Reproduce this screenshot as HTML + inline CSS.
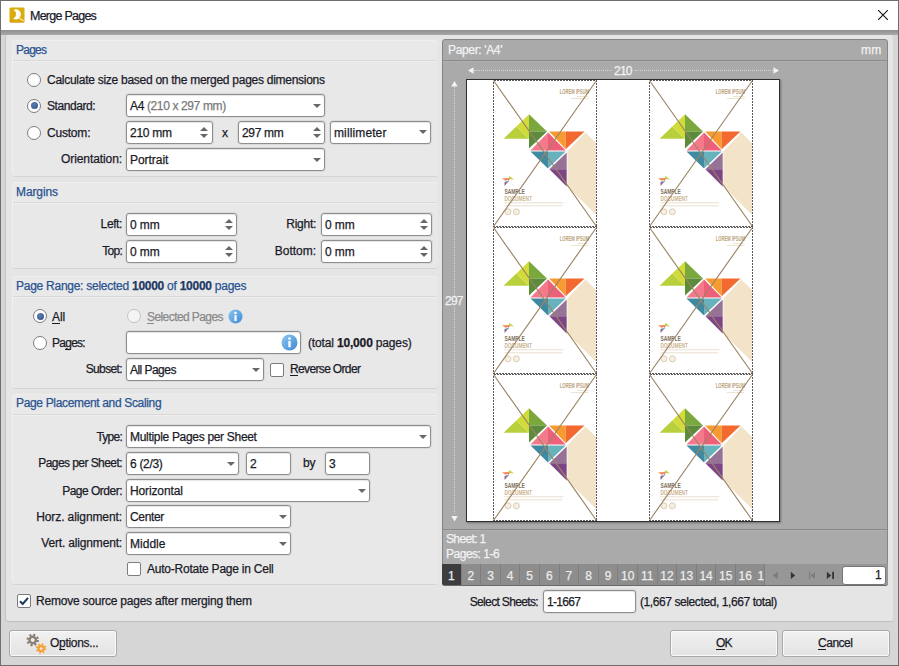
<!DOCTYPE html>
<html><head><meta charset="utf-8">
<style>
*{box-sizing:border-box}
html,body{margin:0;padding:0;width:899px;height:666px;overflow:hidden;background:#d9d9d9}
body{font-family:"Liberation Sans",sans-serif;font-size:12px;letter-spacing:-0.3px;color:#1b1b28;position:relative;-webkit-text-stroke-width:0.25px}
.a{position:absolute;white-space:nowrap;line-height:14px}
.win{position:absolute;left:0;top:0;width:899px;height:666px;border:1px solid #6f6f6f;background:#d6d6d6}
.title{position:absolute;left:1px;top:1px;width:897px;height:29px;background:#fff}
.strip{position:absolute;left:1px;top:30px;width:897px;height:5px;background:linear-gradient(#8f8f8f,#a9a9a9)}
.cont{position:absolute;left:5px;top:35px;width:888px;height:587px;background:#e5e5e5;border-radius:3px;border-left:1px solid #c4c4c4;border-bottom:1px solid #c0c0c0}
.sec{position:absolute;left:12px;width:426px;background:#e8e8e8;border-radius:3px;border-bottom:1px solid #d4d4d4;box-shadow:inset 1px 1px 0 #efefef}
.sech{position:absolute;left:1px;top:1px;width:424px;height:20px;border-bottom:1px solid #d8d8d8;background:#e9e9e9;border-radius:3px 3px 0 0;box-shadow:0 1px 0 #efefef}
.hd{color:#2a5390}
.inp{position:absolute;background:#fff;border:1px solid #8e8e8e;border-radius:3px;box-shadow:0 0 0 1px rgba(0,0,0,.06),inset 0 1px 1px rgba(0,0,0,.1)}
.inp span{position:absolute;left:3px;top:4px;line-height:14px;white-space:nowrap}
.dd{position:absolute;width:0;height:0;border-left:4px solid transparent;border-right:4px solid transparent;border-top:4.5px solid #686868;margin-left:-0.5px}
.up{position:absolute;width:0;height:0;border-left:4px solid transparent;border-right:4px solid transparent;border-bottom:4.5px solid #686868;margin-left:-0.5px}
.rad{position:absolute;width:14px;height:14px;border-radius:50%;border:1px solid #7c7c7c;background:#fff}
.rad.on::after{content:"";position:absolute;left:2.5px;top:2.5px;width:7px;height:7px;border-radius:50%;background:radial-gradient(circle at 40% 35%,#5b7fb0,#2d4f82)}
.chk{position:absolute;width:14px;height:14px;border:1px solid #7c7c7c;background:#fff;border-radius:2px}
.lbl{text-align:right}
.btn{position:absolute;border:1px solid #a9a9a9;border-radius:3px;background:linear-gradient(#f1f1f1,#e3e3e3);box-shadow:inset 0 0 0 1px #fafafa}
.rp{position:absolute;left:442px;top:39px;width:446px;height:547px;background:#aaaaaa;border-radius:3px;border:1px solid #858585}
.wt{color:#f2f2f2}
.tab{position:absolute;top:0;height:21px;width:20px;border-right:1px solid #7e7e7e;text-align:center;color:#ececec;line-height:25px;letter-spacing:0}
u{text-decoration:none;border-bottom:1px solid currentColor;line-height:11px;display:inline-block}
</style></head><body>
<div class="win"></div>
<svg class="a" style="left:0;top:0" width="0" height="0">
<defs>
<symbol id="pg" viewBox="0 0 104 147">
<polygon points="10.6,58.7 23.3,46.5 36,58.7" fill="#b9d03c"></polygon>
<polygon points="36,34.2 23.3,46.5 36,58.7" fill="#d1dc3b"></polygon>
<polygon points="36,34.2 54,51.5 36,51.5" fill="#7aa83d"></polygon>
<polygon points="36,51.5 54,51.5 36,68.6" fill="#5c8b3b"></polygon>
<polygon points="55,52.6 37.5,70.4 55,70.4" fill="#f47a8b"></polygon>
<polygon points="55,52.6 72.7,70.4 55,70.4" fill="#ee6079"></polygon>
<polygon points="37.5,71.5 55,71.5 55,88.4" fill="#3f8aa1"></polygon>
<polygon points="55,71.5 72.7,71.5 55,88.4" fill="#67b2bd"></polygon>
<polygon points="56.2,51.5 72.7,51.5 72.7,69.3" fill="#f79a30"></polygon>
<polygon points="72.7,51.5 91.5,51.5 72.7,69.3" fill="#f26a2f"></polygon>
<polygon points="73.7,72.4 56.4,89.2 73.7,89.2" fill="#957296"></polygon>
<polygon points="56.4,89.2 73.7,89.2 73.7,106.6" fill="#7e4586"></polygon>
<polygon points="74.4,71.6 92.5,52.6 103,63 103,134.8 74.4,106.6" fill="#f2e3c9"></polygon>
<polygon points="9,98.2 15,98.2 13,101" fill="#f58a3a"></polygon>
<polygon points="15,99 16.6,96 21,99.6" fill="#c5d43f"></polygon>
<polygon points="13,98.6 17,98.6 15.5,101" fill="#ee6a80"></polygon>
<polygon points="12,101.2 16.5,101.2 14,103" fill="#4fa0b0"></polygon>
<polygon points="11.5,102 14.5,102.5 11.6,106" fill="#8e5a92"></polygon>
<text x="11.4" y="113.6" font-family="Liberation Sans" font-size="7.4" font-weight="bold" textLength="20.4" lengthAdjust="spacingAndGlyphs" fill="#7d6f5e" letter-spacing="0">SAMPLE</text>
<text x="11.4" y="120.5" font-family="Liberation Sans" font-size="7.4" font-weight="bold" textLength="27.6" lengthAdjust="spacingAndGlyphs" fill="#cdb48f" letter-spacing="0">DOCUMENT</text>
<rect x="11.4" y="122.3" width="59" height="1" fill="#eadfcd"></rect>
<rect x="11.4" y="125.3" width="58" height="1" fill="#eadfcd"></rect>
<circle cx="15" cy="131.8" r="3" fill="#f6efe4" stroke="#d9c7aa" stroke-width="0.9"></circle>
<circle cx="23.4" cy="131.8" r="3" fill="#f6efe4" stroke="#d9c7aa" stroke-width="0.9"></circle>
<text x="66.8" y="14.2" font-family="Liberation Sans" font-size="6.6" font-weight="bold" textLength="29.2" lengthAdjust="spacingAndGlyphs" fill="#bba27c" letter-spacing="0">LOREM IPSUM</text>
<rect x="84" y="16.2" width="11.5" height="0.8" fill="#e9dcc6"></rect>
<rect x="78" y="18" width="17.5" height="0.8" fill="#e9dcc6"></rect>
<path d="M0.5 0.5L103.5 146.5M103.5 0.5L0.5 146.5" stroke="#9c8464" stroke-width="1.15" fill="none"></path>
<rect x="0.5" y="0.5" width="103" height="146" fill="none" stroke="#5a5a5a" stroke-width="1" stroke-dasharray="2 1" shape-rendering="crispEdges"></rect>
</symbol>
</defs></svg>

<div class="title"></div>
<!-- app icon -->
<svg class="a" style="left:9px;top:7px" width="16" height="16" viewBox="0 0 16 16">
  <path d="M1.5 0.5H14.5L15.5 1.5V14.5L14.5 15.5H1.5L0.5 14.5V1.5Z" fill="#d9ae0a"></path>
  <path d="M1 12 L3 14.5 H14 L15.5 15.5 H1Z" fill="#d88a10" opacity="0.7"></path>
<path d="M4.6 3 A4.9 4.9 0 1 1 4.2 11.4 A4.6 4.6 0 0 0 4.6 3Z" fill="#fff"></path><path d="M10.2 10.2 L15 13.4 L14.2 14.4 L9.4 11.2Z" fill="#f6e2b0"></path>
</svg>
<div class="a" style="left: 30px; top: 8.5px; font-size: 12.5px; letter-spacing: -0.75px; color: rgb(27, 27, 43);">Merge Pages</div>
<svg class="a" style="left:877px;top:9px" width="12" height="12" viewBox="0 0 12 12"><path d="M1.2 1.2L10.8 10.8M10.8 1.2L1.2 10.8" stroke="#1a1a1a" stroke-width="1.2"></path></svg>
<div class="strip"></div>
<div class="cont"></div>

<!-- Pages section -->
<div class="sec" style="top:40px;height:137px"><div class="sech"></div></div>
<div class="a hd" style="left: 16px; top: 42.6px; letter-spacing: -0.75px;">Pages</div>
<div class="rad" style="left:27px;top:72.5px"></div>
<div class="a" style="left: 47px; top: 72.5px; letter-spacing: -0.27px;">Calculate size based on the merged pages dimensions</div>
<div class="rad on" style="left:27px;top:98.8px"></div>
<div class="a" style="left: 47px; top: 99px; letter-spacing: -0.43px;">Standard:</div>
<div class="rad" style="left:27px;top:126px"></div>
<div class="a" style="left: 47px; top: 126px; letter-spacing: -0.2px;">Custom:</div>
<div class="a lbl" style="left: 22px; width: 100px; top: 152px; letter-spacing: -0.09px;">Orientation:</div>
<div class="inp" style="left:126px;top:94px;width:199px;height:23px"><span style="letter-spacing: -0.37px;">A4 <span style="position:static;color:#7a7a7a">(210 x 297 mm)</span></span></div>
<div class="dd" style="left:313px;top:104px"></div>
<div class="inp" style="left:126px;top:121px;width:87px;height:23px"><span style="letter-spacing: -0.28px;">210 mm</span></div>
<div class="up" style="left:200px;top:126.5px"></div><div class="dd" style="left:200px;top:134px"></div>
<div class="a" style="left:222px;top:126px">x</div>
<div class="inp" style="left:238px;top:121px;width:87px;height:23px"><span style="letter-spacing: -0.31px;">297 mm</span></div>
<div class="up" style="left:313px;top:126.5px"></div><div class="dd" style="left:313px;top:134px"></div>
<div class="inp" style="left:330px;top:121px;width:101px;height:23px"><span style="letter-spacing: 0.12px;">millimeter</span></div>
<div class="dd" style="left:419px;top:130px"></div>
<div class="inp" style="left:126px;top:148px;width:199px;height:23px"><span style="letter-spacing: -0.05px;">Portrait</span></div>
<div class="dd" style="left:313px;top:158px"></div>

<!-- Margins -->
<div class="sec" style="top:182px;height:87px"><div class="sech"></div></div>
<div class="a hd" style="left: 16px; top: 184.5px; letter-spacing: -0.1px;">Margins</div>
<div class="a lbl" style="left: 22px; width: 100px; top: 217.3px; letter-spacing: -0.39px;">Left:</div>
<div class="inp" style="left:126px;top:213px;width:111px;height:23px"><span style="letter-spacing: -0.08px;">0 mm</span></div>
<div class="up" style="left:225px;top:218.5px"></div><div class="dd" style="left:225px;top:226px"></div>
<div class="a lbl" style="left: 22px; width: 100px; top: 244.3px; letter-spacing: -0.75px;">Top:</div>
<div class="inp" style="left:126px;top:240px;width:111px;height:23px"><span style="letter-spacing: -0.08px;">0 mm</span></div>
<div class="up" style="left:225px;top:245.5px"></div><div class="dd" style="left:225px;top:253px"></div>
<div class="a lbl" style="left: 216px; width: 100px; top: 217.3px; letter-spacing: -0.28px;">Right:</div>
<div class="inp" style="left:321px;top:213px;width:111px;height:23px"><span style="letter-spacing: -0.08px;">0 mm</span></div>
<div class="up" style="left:420px;top:218.5px"></div><div class="dd" style="left:420px;top:226px"></div>
<div class="a lbl" style="left: 216px; width: 100px; top: 244.3px; letter-spacing: -0.01px;">Bottom:</div>
<div class="inp" style="left:321px;top:240px;width:111px;height:23px"><span style="letter-spacing: -0.08px;">0 mm</span></div>
<div class="up" style="left:420px;top:245.5px"></div><div class="dd" style="left:420px;top:253px"></div>

<!-- Page Range -->
<div class="sec" style="top:276px;height:113px"><div class="sech"></div></div>
<div class="a hd" style="left: 16px; top: 278.6px; letter-spacing: -0.26px;">Page Range: selected <b style="color:#1d3a66">10000</b> of <b style="color:#1d3a66">10000</b> pages</div>
<div class="rad on" style="left:33px;top:309.3px"></div>
<div class="a" style="left: 52px; top: 309.6px; letter-spacing: -0.08px;"><u>A</u>ll</div>
<div class="rad" style="left:127px;top:309.3px;border-color:#c4c4c4;background:#f4f4f4"></div>
<div class="a" style="left: 147px; top: 309.6px; color: rgb(138, 138, 138); letter-spacing: -0.58px;"><u>S</u>elected Pages</div>
<svg class="a" style="left:227.5px;top:308.5px" width="16" height="16" viewBox="0 0 16 16"><defs><linearGradient id="ig" x1="0" y1="0" x2="1" y2="1"><stop offset="0" stop-color="#8cc6f0"></stop><stop offset="1" stop-color="#3d8ad6"></stop></linearGradient></defs><circle cx="7.5" cy="7.5" r="7" fill="url(#ig)"></circle><circle cx="7.5" cy="4" r="1.3" fill="#fff"></circle><rect x="6.4" y="6.2" width="2.2" height="5.8" fill="#fff"></rect></svg>
<div class="rad" style="left:33px;top:336.3px"></div>
<div class="a" style="left: 52px; top: 336.3px; letter-spacing: -0.75px;">Pa<u>g</u>es:</div>
<div class="inp" style="left:126px;top:331px;width:175px;height:23px"></div>
<svg class="a" style="left:281px;top:334px" width="17" height="17" viewBox="0 0 16 16"><circle cx="8" cy="8" r="7.5" fill="url(#ig)"></circle><circle cx="8" cy="4.3" r="1.3" fill="#fff"></circle><rect x="6.9" y="6.5" width="2.2" height="6" fill="#fff"></rect></svg>
<div class="a" style="left: 308px; top: 336.3px; letter-spacing: -0.16px;">(total <b>10,000</b> pages)</div>
<div class="a lbl" style="left: 22px; width: 100px; top: 362.3px; letter-spacing: -0.63px;">Subset:</div>
<div class="inp" style="left:126px;top:358px;width:138px;height:23px"><span style="letter-spacing: -0.54px;">All Pages</span></div>
<div class="dd" style="left:252px;top:368px"></div>
<div class="chk" style="left:270px;top:363px"></div>
<div class="a" style="left: 290px; top: 362.3px; letter-spacing: -0.65px;"><u>R</u>everse Order</div>

<!-- Page Placement and Scaling -->
<div class="sec" style="top:394px;height:191px"><div class="sech"></div></div>
<div class="a hd" style="left: 16px; top: 395.7px; letter-spacing: -0.34px;">Page Placement and Scaling</div>
<div class="a lbl" style="left: 22px; width: 100px; top: 429.8px; letter-spacing: -0.75px;">Type:</div>
<div class="inp" style="left:126px;top:425px;width:305px;height:23px"><span style="letter-spacing: -0.31px;">Multiple Pages per Sheet</span></div>
<div class="dd" style="left:419px;top:435px"></div>
<div class="a lbl" style="left: 22px; width: 100px; top: 456.3px; letter-spacing: -0.56px;">Pages per Sheet:</div>
<div class="inp" style="left:126px;top:452px;width:113px;height:23px"><span style="letter-spacing: -0.31px;">6 (2/3)</span></div>
<div class="dd" style="left:227px;top:462px"></div>
<div class="inp" style="left:246px;top:452px;width:45px;height:23px"><span>2</span></div>
<div class="a" style="left: 303px; top: 456.3px; letter-spacing: -0.29px;">by</div>
<div class="inp" style="left:325px;top:452px;width:45px;height:23px"><span>3</span></div>
<div class="a lbl" style="left: 22px; width: 100px; top: 483.8px; letter-spacing: -0.5px;">Page Order:</div>
<div class="inp" style="left:126px;top:479px;width:244px;height:23px"><span style="letter-spacing: -0.13px;">Horizontal</span></div>
<div class="dd" style="left:358px;top:489px"></div>
<div class="a lbl" style="left: 22px; width: 100px; top: 509.8px; letter-spacing: -0.1px;">Horz. alignment:</div>
<div class="inp" style="left:126px;top:505px;width:165px;height:23px"><span style="letter-spacing: -0.34px;">Center</span></div>
<div class="dd" style="left:279px;top:515px"></div>
<div class="a lbl" style="left: 22px; width: 100px; top: 536.3px; letter-spacing: -0.17px;">Vert. alignment:</div>
<div class="inp" style="left:126px;top:532px;width:165px;height:23px"><span style="letter-spacing: 0.02px;">Middle</span></div>
<div class="dd" style="left:279px;top:542px"></div>
<div class="chk" style="left:127px;top:562px"></div>
<div class="a" style="left: 147px; top: 562.3px; letter-spacing: -0.23px;">Auto-Rotate Page in Cell</div>

<!-- remove source -->
<div class="chk" style="left:17px;top:594px"></div>
<svg class="a" style="left:17px;top:594px" width="14" height="14" viewBox="0 0 14 14"><path d="M3 7.2L5.7 10L11 3.8" fill="none" stroke="#1e3a64" stroke-width="2"></path></svg>
<div class="a" style="left: 36px; top: 594.3px; letter-spacing: -0.22px;">Remove source pages after merging them</div>

<!-- Right panel -->
<div class="rp"></div>
<div class="a" style="left:443px;top:60px;width:444px;height:1px;background:#8a8a8a"></div><div class="a" style="left:443px;top:61px;width:444px;height:1px;background:#b0b0b0"></div>
<div class="a wt" style="left: 448px; top: 42.5px; letter-spacing: -0.35px;">Paper: 'A4'</div>
<div class="a wt" style="left: 861px; top: 42.5px; letter-spacing: 0.15px;">mm</div>

<div class="a" style="left:443px;top:529px;width:444px;height:1px;background:#8a8a8a"></div><div class="a" style="left:443px;top:530px;width:444px;height:1px;background:#b0b0b0"></div>

<!-- preview -->
<div class="a" style="left:454px;top:84px;width:0;height:430px;border-left:1px dotted #d6d6d6"></div>
<div class="a" style="left:474px;top:70px;width:138px;height:0;border-top:1px dotted #d6d6d6"></div>
<div class="a" style="left:635px;top:70px;width:138px;height:0;border-top:1px dotted #d6d6d6"></div>
<svg class="a" style="left:467px;top:66px" width="8" height="9"><polygon points="1,4.5 6.5,1.3 6.5,7.7" fill="#f4f4f4"></polygon></svg>
<svg class="a" style="left:772px;top:66px" width="8" height="9"><polygon points="7,4.5 1.5,1.3 1.5,7.7" fill="#f4f4f4"></polygon></svg>
<svg class="a" style="left:450.3px;top:80px" width="9" height="8"><polygon points="4.5,1 1.3,6.5 7.7,6.5" fill="#f4f4f4"></polygon></svg>
<svg class="a" style="left:450.3px;top:515px" width="9" height="8"><polygon points="4.5,6.5 1.3,1 7.7,1" fill="#f4f4f4"></polygon></svg>
<div class="a" style="left:452px;top:296px;width:14px;height:10px;background:#aaaaaa"></div>
<div class="a" style="left:612px;top:65px;width:22px;height:10px;background:#aaaaaa"></div>
<div class="a wt" style="left: 614px; top: 63.5px; letter-spacing: -0.75px;">210</div>
<div class="a wt" style="left: 445px; top: 293.5px; letter-spacing: -0.75px;">297</div>
<div class="a" style="left:466px;top:79px;width:314px;height:443px;background:#fff;border:1px solid #2e2e2e;box-shadow:1px 1px 2px rgba(0,0,0,.35)"></div>
<svg class="a" style="left:493px;top:80px" width="104" height="147"><use href="#pg"></use></svg>
<svg class="a" style="left:649px;top:80px" width="104" height="147"><use href="#pg"></use></svg>
<svg class="a" style="left:493px;top:227px" width="104" height="147"><use href="#pg"></use></svg>
<svg class="a" style="left:649px;top:227px" width="104" height="147"><use href="#pg"></use></svg>
<svg class="a" style="left:493px;top:374px" width="104" height="147"><use href="#pg"></use></svg>
<svg class="a" style="left:649px;top:374px" width="104" height="147"><use href="#pg"></use></svg>

<div class="a" style="left:442px;top:564px;width:446px;height:22px;background:#999;border-bottom:1px solid #6a6a6a;border-radius:0 0 3px 3px;overflow:hidden">
<div class="tab" style="left:0.0px;width:19.6px;background:#3d3d3f">1</div>
<div class="tab" style="left:19.6px;width:19.6px;background:#8d8d8d">2</div>
<div class="tab" style="left:39.2px;width:19.6px;background:#8d8d8d">3</div>
<div class="tab" style="left:58.8px;width:19.6px;background:#8d8d8d">4</div>
<div class="tab" style="left:78.4px;width:19.6px;background:#8d8d8d">5</div>
<div class="tab" style="left:98.0px;width:19.6px;background:#8d8d8d">6</div>
<div class="tab" style="left:117.6px;width:19.6px;background:#8d8d8d">7</div>
<div class="tab" style="left:137.2px;width:19.6px;background:#8d8d8d">8</div>
<div class="tab" style="left:156.8px;width:19.6px;background:#8d8d8d">9</div>
<div class="tab" style="left:176.4px;width:19.6px;background:#8d8d8d">10</div>
<div class="tab" style="left:196.0px;width:19.6px;background:#8d8d8d">11</div>
<div class="tab" style="left:215.6px;width:19.6px;background:#8d8d8d">12</div>
<div class="tab" style="left:235.2px;width:19.6px;background:#8d8d8d">13</div>
<div class="tab" style="left:254.8px;width:19.6px;background:#8d8d8d">14</div>
<div class="tab" style="left:274.4px;width:19.6px;background:#8d8d8d">15</div>
<div class="tab" style="left:294.0px;width:19.6px;background:#8d8d8d">16</div>
<div class="tab" style="left:312.4px;width:11px;background:#8d8d8d;overflow:hidden;text-align:left;padding-left:3px">17</div>
<div class="a" style="left:323px;top:0;width:123px;height:21px;background:#979797"></div><svg class="a" style="left:323px;top:0px" width="80" height="21" viewBox="0 0 80 21">
<polygon points="7.6,11.4 12.9,7.8 12.9,15" fill="#7c7c7c"></polygon>
<polygon points="25.8,7.8 30.2,11.4 25.8,15" fill="#353535"></polygon>
<rect x="44" y="7.8" width="1.2" height="7.2" fill="#7c7c7c"></rect><polygon points="45.8,11.4 49.8,7.8 49.8,15" fill="#7c7c7c"></polygon>
<polygon points="61.8,7.8 66.3,11.4 61.8,15" fill="#353535"></polygon><rect x="67.2" y="7.8" width="1.8" height="7.2" fill="#353535"></rect>
</svg>
<div class="a" style="left:399.5px;top:2px;width:44.5px;height:19px;background:#fff;border-radius:3px;border:1px solid #777"></div>
<div class="a" style="left:433px;top:4px;color:#222;letter-spacing:0">1</div>
</div>
<div class="a wt" style="left: 446px; top: 531.5px; letter-spacing: -0.63px;">Sheet: 1</div>
<div class="a wt" style="left: 446px; top: 546.6px; letter-spacing: -0.49px;">Pages: 1-6</div>

<!-- Buttons -->
<div class="btn" style="left:9px;top:630px;width:108px;height:27px"></div>
<svg class="a" style="left:24px;top:632px" width="26" height="24" viewBox="0 0 26 24">
<circle cx="8.7" cy="8" r="3.2" fill="none" stroke="#8b7f75" stroke-width="2.4"></circle>
<circle cx="8.7" cy="8" r="5.1" fill="none" stroke="#8b7f75" stroke-width="2.4" stroke-dasharray="2 2.005"></circle>
<circle cx="17.1" cy="16.4" r="2.6" fill="none" stroke="#f8a032" stroke-width="2.2"></circle>
<circle cx="17.1" cy="16.4" r="4.2" fill="none" stroke="#f8a032" stroke-width="2" stroke-dasharray="1.65 1.65"></circle>
</svg>
<div class="a" style="left: 50px; top: 636px; letter-spacing: -0.31px;">O<u>p</u>tions...</div>
<div class="btn" style="left:670px;top:630px;width:108px;height:27px"></div>
<div class="a" style="left: 716px; top: 636px; letter-spacing: -0.75px;"><u>O</u>K</div>
<div class="btn" style="left:782px;top:630px;width:108px;height:27px"></div>
<div class="a" style="left: 818px; top: 636px; letter-spacing: -0.48px;"><u>C</u>ancel</div>

<div class="a lbl" style="left: 438px; width: 100px; top: 594.6px; letter-spacing: -0.65px;">Select Sheets:</div>
<div class="inp" style="left:543px;top:590px;width:93px;height:23px"><span style="letter-spacing: -0.71px;">1-1667</span></div>
<div class="a" style="left: 640px; top: 594.6px; letter-spacing: -0.41px;">(1,667 selected, 1,667 total)</div>

</body></html>
